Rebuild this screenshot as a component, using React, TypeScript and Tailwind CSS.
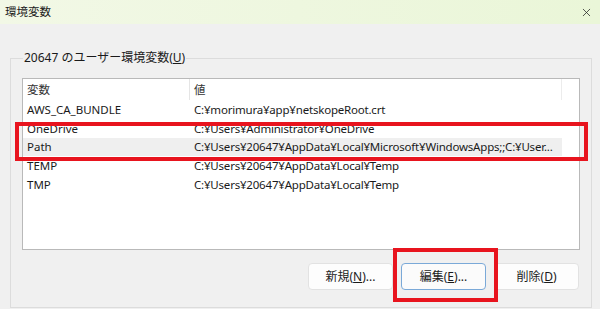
import { X } from "lucide-react";

const rows = [
  { name: "AWS_CA_BUNDLE", value: "C:¥morimura¥app¥netskopeRoot.crt" },
  { name: "OneDrive", value: "C:¥Users¥Administrator¥OneDrive" },
  {
    name: "Path",
    value: "C:¥Users¥20647¥AppData¥Local¥Microsoft¥WindowsApps;;C:¥User...",
    selected: true,
  },
  { name: "TEMP", value: "C:¥Users¥20647¥AppData¥Local¥Temp" },
  { name: "TMP", value: "C:¥Users¥20647¥AppData¥Local¥Temp" },
];

const font = "font-['Noto_Sans','Noto_Sans_CJK_JP',sans-serif]";

function Btn({
  label,
  hot,
  tail,
  focused,
}: {
  label: string;
  hot: string;
  tail: string;
  focused?: boolean;
}) {
  return (
    <button
      className={`w-[85px] h-[27px] rounded-[4px] text-[12px] text-[#1b1b1b] flex items-center justify-center ${
        focused
          ? "border border-[#7aa9d8] bg-[#fbfbfb]"
          : "border border-[#e2e2e2] bg-[#fdfdfd]"
      }`}
    >
      {label}(<span className="underline">{hot}</span>){tail}
    </button>
  );
}

export default function App() {
  return (
    <div
      className={`relative w-[600px] h-[309px] overflow-hidden bg-[#f0f0f0] ${font}`}
    >
      {/* Title bar */}
      <div className="h-[24px] flex items-center justify-between pl-[5px] pr-[7px] bg-gradient-to-r from-[#f2f8e6] to-[#eaf6d8]">
        <span className="text-[11.5px] text-[#1a1a1a]">環境変数</span>
        <X size={13} strokeWidth={1.4} className="text-[#222]" />
      </div>

      {/* User variables group */}
      <fieldset className="ml-[10px] mr-[8px] mt-[26px] h-[258px] border border-[#dcdcdc] px-[11px] pb-[12px]">
        <legend className="ml-[1px] px-[1px] text-[12px] leading-[16px] text-[#1a1a1a]">
          20647 のユーザー環境変数(<span className="underline">U</span>)
        </legend>

        <div className="mt-[12px] h-[172px] border border-[#b9b9b9] bg-white text-[11.5px] text-[#1a1a1a]">
          <div className="flex h-[21px] items-center">
            <div className="w-[167px] h-full flex items-center pl-[4px] border-r border-[#e5e5e5] text-[#333]">
              変数
            </div>
            <div className="w-[372px] h-full flex items-center pl-[4px] border-r border-[#ececec] text-[#333]">
              値
            </div>
          </div>
          {rows.map((r) => (
            <div
              key={r.name}
              className={`flex h-[18.75px] items-center w-[539px] ${
                r.selected ? "bg-[#efefef]" : ""
              }`}
            >
              <div className="w-[167px] pl-[4px] whitespace-nowrap overflow-hidden">
                {r.name}
              </div>
              <div className="w-[372px] pl-[4px] whitespace-nowrap overflow-hidden tracking-[-0.2px]">
                {r.value}
              </div>
            </div>
          ))}
        </div>

        <div className="mt-[13px] flex justify-end gap-[8px] pr-[1px]">
          <Btn label="新規" hot="N" tail="..." />
          <Btn label="編集" hot="E" tail="..." focused />
          <Btn label="削除" hot="D" tail="" />
        </div>
      </fieldset>

      {/* Red annotation boxes */}
      <div className="absolute left-[15px] top-[122px] w-[573px] h-[39px] border-[4px] border-[#e8141e]" />
      <div className="absolute left-[393px] top-[248px] w-[105px] h-[54px] border-[4px] border-[#e8141e]" />
    </div>
  );
}
